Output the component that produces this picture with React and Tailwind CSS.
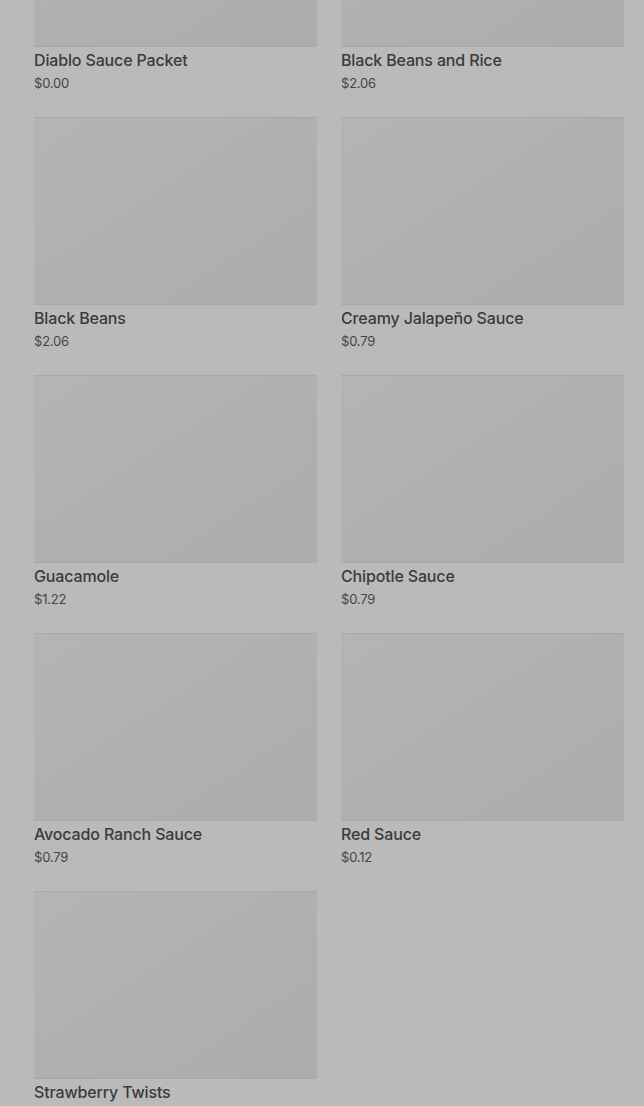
import React from 'react';

const items = [
  { name: 'Diablo Sauce Packet', price: '$0.00' },
  { name: 'Black Beans and Rice', price: '$2.06' },
  { name: 'Black Beans', price: '$2.06' },
  { name: 'Creamy Jalapeño Sauce', price: '$0.79' },
  { name: 'Guacamole', price: '$1.22' },
  { name: 'Chipotle Sauce', price: '$0.79' },
  { name: 'Avocado Ranch Sauce', price: '$0.79' },
  { name: 'Red Sauce', price: '$0.12' },
  { name: 'Strawberry Twists', price: '$1.25' },
];

const ItemCard = ({ item }) => (
  <div className="flex flex-col">
    <div className="h-[188px] w-full border-y border-[#a9a9a9] bg-gradient-to-br from-[#b4b4b4] to-[#acacac]" />
    <div className="mt-[2px] text-[16px] leading-[22px] font-medium tracking-[-0.15px] text-[#3b3b3b]">{item.name}</div>
    <div className="mt-[1px] text-[13px] leading-[22px] tracking-[-0.2px] text-[#454545]">{item.price}</div>
  </div>
);

export default function App() {
  return (
    <div
      className="h-[1106px] overflow-hidden bg-[#bababa]"
      style={{ fontFamily: 'Inter, "Noto Sans", sans-serif' }}
    >
      <div className="-mt-[141px] grid grid-cols-2 gap-x-[24px] gap-y-[23px] pl-[34px] pr-[20px]">
        {items.map((item) => (
          <ItemCard key={item.name} item={item} />
        ))}
      </div>
    </div>
  );
}
